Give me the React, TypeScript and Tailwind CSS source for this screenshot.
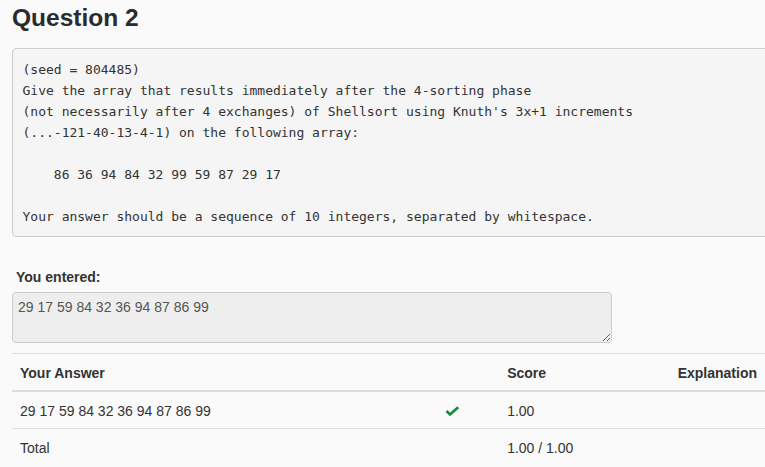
export default function App() {
  const question = `(seed = 804485)
Give the array that results immediately after the 4-sorting phase
(not necessarily after 4 exchanges) of Shellsort using Knuth's 3x+1 increments
(...-121-40-13-4-1) on the following array:

    86 36 94 84 32 99 59 87 29 17

Your answer should be a sequence of 10 integers, separated by whitespace.`;

  const answer = '29 17 59 84 32 36 94 87 86 99';

  return (
    <div className="w-[765px] h-[467px] overflow-hidden bg-[#fafafa] text-[#333] font-['Liberation_Sans',Arial,sans-serif]">
      <div className="w-[790px] pl-[12px]">
        <h3 className="pt-[5px] text-[24.5px] leading-[26px] font-bold text-[#2b2b2b]">Question 2</h3>

        <pre className="mt-[17px] w-[770px] p-[9.5px] border border-[#ccc] rounded-[4px] bg-[#f5f5f5] text-[13px] leading-[21px] text-[#333] font-['DejaVu_Sans_Mono',monospace] whitespace-pre">
          {question}
        </pre>

        <div className="mt-[30px] ml-[4px] text-[14px] leading-[20px] font-bold">You entered:</div>
        <textarea
          readOnly
          value={answer}
          className="block mt-[5px] w-[600px] h-[51px] pt-[4px] px-[5px] border border-[#ccc] rounded-[4px] bg-[#eee] text-[14px] leading-[20px] text-[#555] outline-none"
        />

        <table className="mt-[10px] w-[753px] border-collapse text-[14px] leading-[20px] text-left">
          <thead>
            <tr className="border-t border-[#ddd]">
              <th className="w-[425px] px-[8px] pt-[9px] pb-[7px] font-bold border-b-2 border-[#ddd]">Your Answer</th>
              <th className="w-[64px] px-[8px] pt-[9px] pb-[7px] border-b-2 border-[#ddd]"></th>
              <th className="w-[171px] px-[8px] pt-[9px] pb-[7px] font-bold border-b-2 border-[#ddd]">Score</th>
              <th className="px-[8px] pt-[9px] pb-[7px] font-bold border-b-2 border-[#ddd]">Explanation</th>
            </tr>
          </thead>
          <tbody>
            <tr className="border-b border-[#ddd]">
              <td className="px-[8px] pt-[9px] pb-[7px]">{answer}</td>
              <td className="px-[8px] pt-[9px] pb-[7px]">
                <svg width="15" height="10" viewBox="0 0 15 10" className="block ml-[2px]">
                  <path d="M1.5 5 L5 8.4 L13.2 1.2" fill="none" stroke="#13893a" strokeWidth="2.6" strokeLinejoin="miter" />
                </svg>
              </td>
              <td className="px-[8px] pt-[9px] pb-[7px]">1.00</td>
              <td className="px-[8px] pt-[9px] pb-[7px]"></td>
            </tr>
            <tr>
              <td className="px-[8px] pt-[9px] pb-[7px]">Total</td>
              <td className="px-[8px] pt-[9px] pb-[7px]"></td>
              <td className="px-[8px] pt-[9px] pb-[7px]">1.00 / 1.00</td>
              <td className="px-[8px] pt-[9px] pb-[7px]"></td>
            </tr>
          </tbody>
        </table>
      </div>
    </div>
  );
}
